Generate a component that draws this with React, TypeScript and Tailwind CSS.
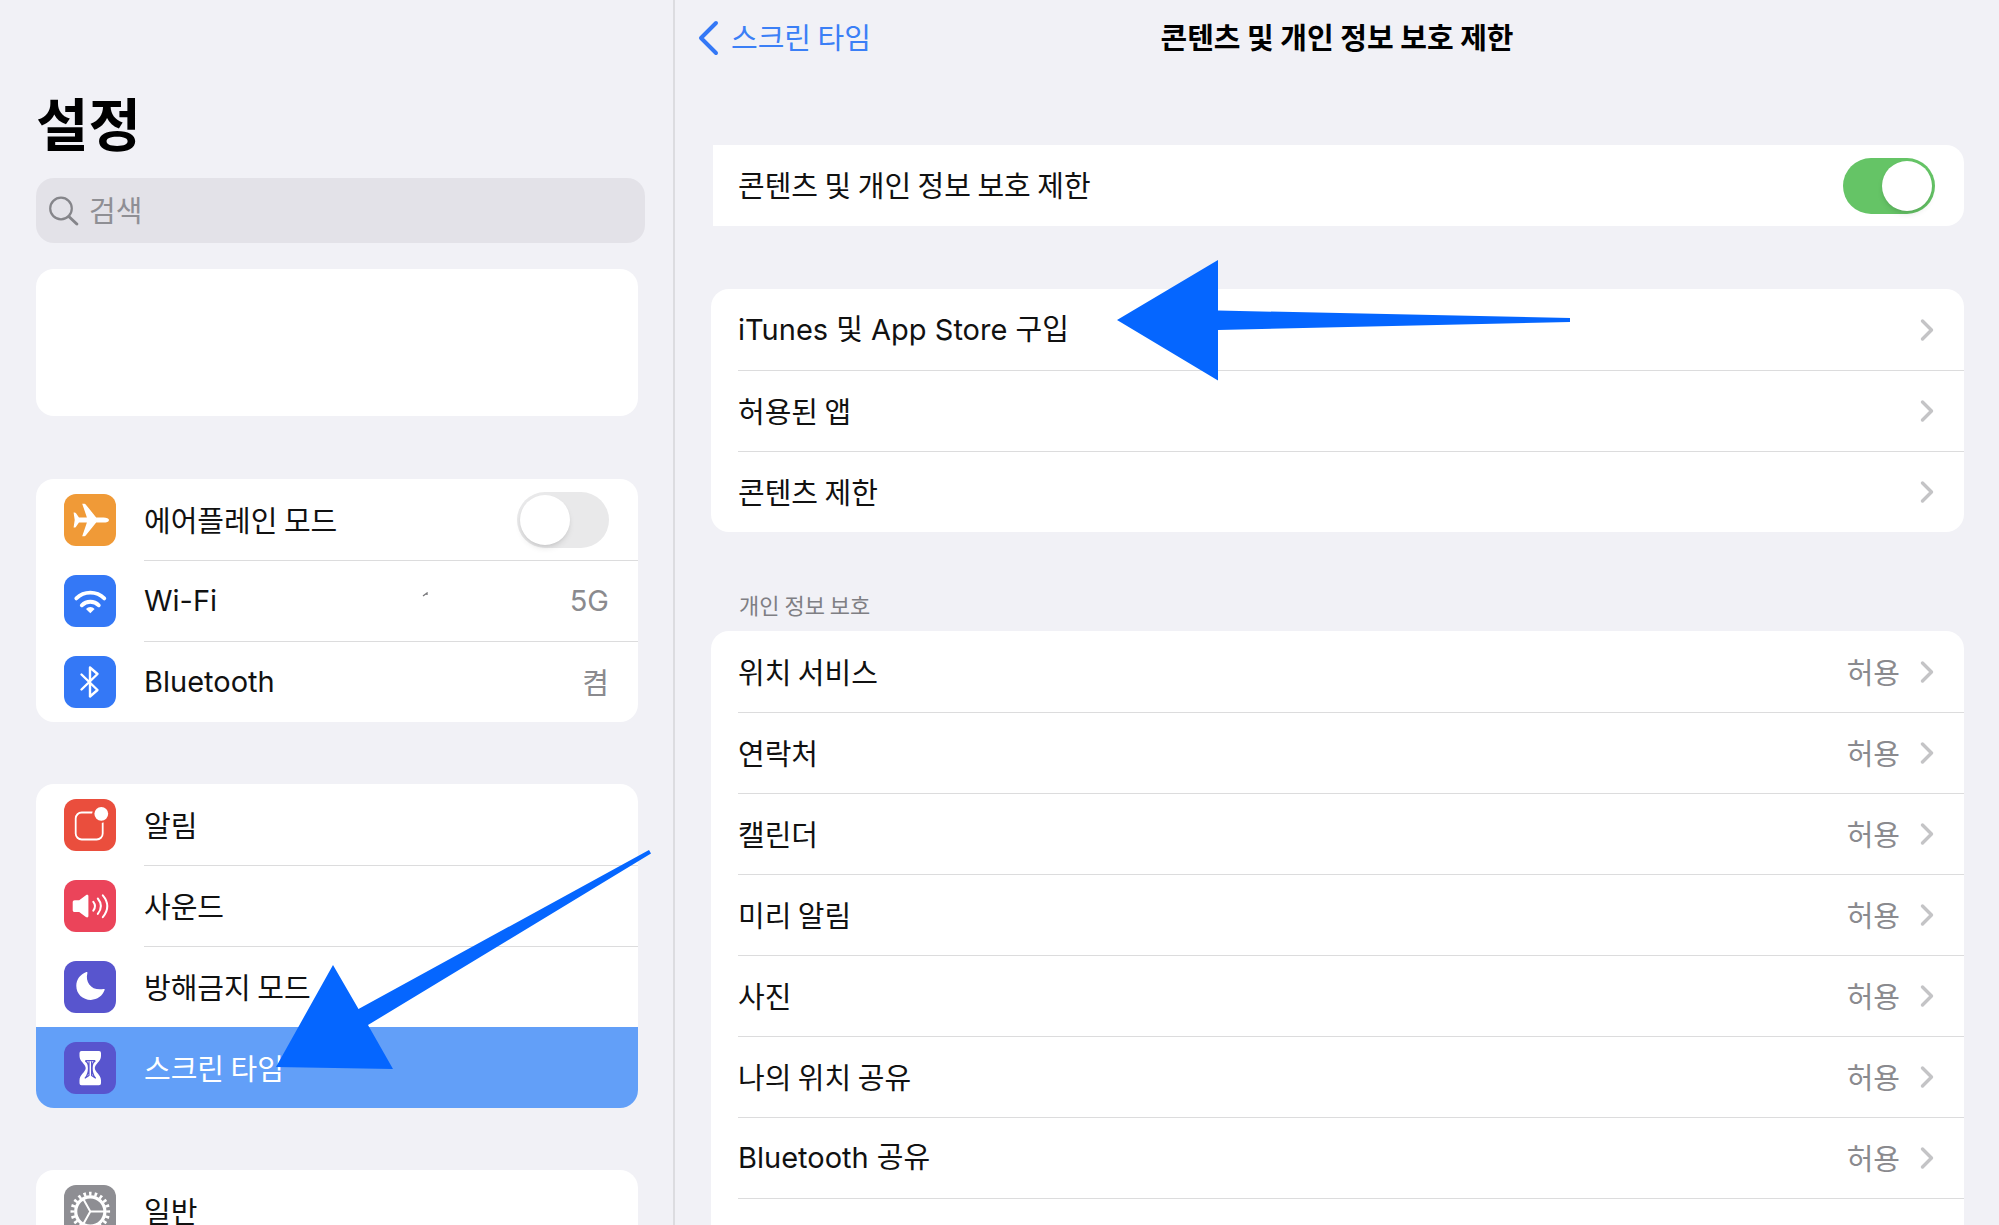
import React, { useState } from "react";

type IconProps = { children: React.ReactNode; color: string };

function AppIcon({ children, color }: IconProps) {
  return (
    <span className={`flex size-[52px] shrink-0 overflow-hidden rounded-xl ${color}`}>
      <svg viewBox="0 0 52 52" className="size-full" fill="none" stroke="none" aria-hidden="true">
        {children}
      </svg>
    </span>
  );
}

const AirplaneIcon = () => (
  <AppIcon color="bg-[#f09a37]">
    <path
      fill="#fff"
      d="M45 26c0-1.700-2.500-2.600-5.500-2.600h-7.300L22.300 11.200c-.8-1.100-1.500-1.500-2.600-1.500h-1.500l4.700 13.700H15l-3-4.100c-.4-.6-.8-.9-1.500-.9H9.600l1.100 7.600-1.100 7.600h.9c.7 0 1.100-.3 1.500-.9l3-4.100h7.900l-4.700 13.700h1.500c1.100 0 1.800-.4 2.600-1.500l9.900-12.200h7.300c3 0 5.500-.9 5.500-2.600z"
    />
  </AppIcon>
);

const WifiIcon = () => (
  <AppIcon color="bg-[#3478f6]">
    <path d="M12.300 23.400A20 20 0 0 1 40.300 23.400" stroke="#fff" strokeWidth="3.800" strokeLinecap="round" />
    <path d="M17.800 30.300A12 12 0 0 1 34.800 30.300" stroke="#fff" strokeWidth="3.800" strokeLinecap="round" />
    <path fill="#fff" d="M26.300 38.200l-4.300-4.300a6 6 0 0 1 8.600 0z" />
  </AppIcon>
);

const BluetoothIcon = () => (
  <AppIcon color="bg-[#3478f6]">
    <path d="M17.500 18.500l16 15.500-7.500 6.500v-29l7.500 6.500-16 15.500" stroke="#fff" strokeWidth="2.400" strokeLinejoin="round" strokeLinecap="round" />
  </AppIcon>
);

const NotificationIcon = () => (
  <AppIcon color="bg-[#ea4e3d]">
    <rect x="11.700" y="13.500" width="27" height="27" rx="6" stroke="#fff" strokeWidth="1.800" />
    <circle cx="37.300" cy="14.800" r="9.200" fill="#ea4e3d" />
    <circle cx="37.300" cy="14.800" r="6.900" fill="#fff" />
  </AppIcon>
);

const SoundIcon = () => (
  <AppIcon color="bg-[#eb445a]">
    <path fill="#fff" d="M8.700 22.300c0-1.400.7-2.100 2.100-2.100h4.400l6.700-5c1.200-.9 2.500-.5 2.500.9v20c0 1.400-1.300 1.800-2.500.9l-6.700-5h-4.400c-1.400 0-2.100-.7-2.100-2.100z" />
    <path d="M29.300 21.800q3.400 4.200 0 8.800M33.800 18.500q6.200 7.500 0 15.400M38.800 15.300q9 10.700 0 21.800" stroke="#fff" strokeWidth="2" strokeLinecap="round" />
  </AppIcon>
);

const MoonIcon = () => (
  <AppIcon color="bg-[#5855ce]">
    <path
      fill="#fff"
      d="M22.400 11.100c.8-.3 1.200.1 1 .8-2.600 10 4.700 18.300 16.200 16.100.9-.1 1.300.3 1 1.100-2 5.800-7.500 9.800-13.700 9.800-8.300 0-14.600-6.100-14.600-14.200 0-6 4-11.500 10.100-13.600z"
    />
  </AppIcon>
);

const HourglassIcon = () => (
  <AppIcon color="bg-[#5855ce]">
    <path
      fill="#fff"
      d="M17.500 9h17.500q2 0 2 2v3c0 5.500-6.200 8-6.200 12.100s6.200 6.600 6.200 12.100v3q0 2-2 2H17.500q-2 0-2-2v-3c0-5.500 6.200-8 6.200-12.100s-6.200-6.600-6.200-12.100v-3q0-2 2-2z"
    />
    <path
      d="M21.300 18.700h10M25 19.500v14l-3.800 2.500q3.300-4 3.300-9.800t-3.300-7.300M27.600 19.500v14l3.800 2.500q-3.300-4-3.300-9.800t3.300-7.300"
      stroke="#5855ce"
      strokeWidth="1.200"
      strokeLinejoin="round"
    />
  </AppIcon>
);

const GearIcon = () => (
  <AppIcon color="bg-[#8e8e93]">
    <circle cx="26.300" cy="26.500" r="14.600" stroke="#fff" strokeWidth="3.200" />
    <circle cx="26.300" cy="26.500" r="17.800" stroke="#fff" strokeWidth="4" pathLength="40" strokeDasharray="0.900 1.100" strokeDashoffset="0.450" />
    <path d="M26.300 26.500h14M26.300 26.500l-7-12.600M26.300 26.500l-7 12.600" stroke="#fff" strokeWidth="2" />
  </AppIcon>
);

function Switch({ label, initial }: { label: string; initial: boolean }) {
  const [on, setOn] = useState(initial);
  return (
    <label className="relative flex h-14 w-[92px] shrink-0 cursor-pointer">
      <input
        type="checkbox"
        role="switch"
        aria-label={label}
        checked={on}
        onChange={(e) => setOn(e.target.checked)}
        className="peer sr-only"
      />
      <span className="flex size-full items-center rounded-full bg-[#e9e9ea] p-[3px] peer-checked:justify-end peer-checked:bg-[#65c466]">
        <span className="size-[50px] rounded-full bg-white shadow-md" />
      </span>
    </label>
  );
}

/* Labels with Latin words use Inter; Hangul in them falls through to Noto. */
function Label({ text }: { text: string }) {
  const latin = /[A-Za-z]/.test(text);
  return (
    <span className="block pb-[3px]">
      <span className={latin ? "font-[Inter,'Noto_Sans_CJK_KR',sans-serif]" : ""}>{text}</span>
    </span>
  );
}

type Item = {
  label: string;
  icon?: React.ReactNode;
  value?: string;
  mark?: boolean;
  toggle?: boolean;
  selected?: boolean;
};

function SidebarGroup({ items, children }: { items: Item[]; children?: React.ReactNode }) {
  return (
    <div className="relative mr-[7px]">
      <ul className="overflow-hidden rounded-[18px] bg-white">
        {items.map((item, i) => {
          const divided = i > 0 && !item.selected;
          const body = (
            <>
              {item.icon}
              <span
                className={`flex h-full min-w-0 flex-1 items-center justify-between border-t pr-[29px] ${
                  divided ? "border-[#dcdcdd]" : "border-transparent"
                }`}
              >
                <Label text={item.label} />
                {item.mark && (
                  <svg viewBox="0 0 6 6" className="mb-3 ml-16 size-1.5" fill="none" aria-hidden="true">
                    <path d="M1 4L5 1V3" stroke="#77777a" strokeWidth="1.300" />
                  </svg>
                )}
                {item.value && (
                  <span className="text-[#8a8a8e]">
                    <Label text={item.value} />
                  </span>
                )}
                {item.toggle && <Switch label={item.label} initial={false} />}
              </span>
            </>
          );
          return (
            <li key={item.label}>
              {item.toggle ? (
                <div className="flex h-[81px] items-center gap-7 pl-7">{body}</div>
              ) : (
                <button
                  type="button"
                  className={`flex h-[81px] w-full items-center gap-7 pl-7 text-left ${
                    item.selected ? "bg-[#629ff8] text-white" : ""
                  }`}
                >
                  {body}
                </button>
              )}
            </li>
          );
        })}
      </ul>
      {children}
    </div>
  );
}

function Chevron() {
  return (
    <svg viewBox="0 0 14 24" className="h-6 w-3.5 shrink-0" fill="none" aria-hidden="true">
      <path d="M2.500 3l9 9-9 9" stroke="#c4c4c6" strokeWidth="3.400" strokeLinecap="round" strokeLinejoin="round" />
    </svg>
  );
}

function DetailGroup({ items, children }: { items: Item[]; children?: React.ReactNode }) {
  return (
    <div className="relative">
      <ul className="overflow-hidden rounded-[18px] bg-white pl-[27px]">
        {items.map((item, i) => (
          <li key={item.label} className={`border-t ${i > 0 ? "border-[#dcdcdd]" : "border-transparent"}`}>
            <button type="button" className="flex h-20 w-full items-center pr-[30px] text-left">
              <span className="flex-1">
                <Label text={item.label} />
              </span>
              {item.value && (
                <span className="mr-5 text-[#8a8a8e]">
                  <Label text={item.value} />
                </span>
              )}
              <Chevron />
            </button>
          </li>
        ))}
      </ul>
      {children}
    </div>
  );
}

const connections: Item[] = [
  { label: "에어플레인 모드", icon: <AirplaneIcon />, toggle: true },
  { label: "Wi-Fi", icon: <WifiIcon />, value: "5G", mark: true },
  { label: "Bluetooth", icon: <BluetoothIcon />, value: "켬" },
];

const alerts: Item[] = [
  { label: "알림", icon: <NotificationIcon /> },
  { label: "사운드", icon: <SoundIcon /> },
  { label: "방해금지 모드", icon: <MoonIcon /> },
  { label: "스크린 타임", icon: <HourglassIcon />, selected: true },
];

const general: Item[] = [{ label: "일반", icon: <GearIcon /> }];

const restrictions: Item[] = [
  { label: "iTunes 및 App Store 구입" },
  { label: "허용된 앱" },
  { label: "콘텐츠 제한" },
];

const privacy: Item[] = [
  "위치 서비스",
  "연락처",
  "캘린더",
  "미리 알림",
  "사진",
  "나의 위치 공유",
  "Bluetooth 공유",
  "마이크",
].map((label) => ({ label, value: "허용" }));

export default function App() {
  return (
    <div className="flex h-screen overflow-hidden bg-[#f1f1f6] font-['Noto_Sans_CJK_KR',Inter,sans-serif] text-[29px] leading-10 text-[#111]">
      <aside className="w-[675px] shrink-0 border-r-2 border-[#dcdce0] pt-[89px] pr-[28px] pl-9">
        <h1 className="mb-[25px] text-[57px] leading-[64px] font-bold text-black">설정</h1>
        <label className="mb-[26px] flex h-[65px] items-center gap-[10px] rounded-[18px] bg-[#e3e2e8] pl-[13px]">
          <svg viewBox="0 0 30 30" className="size-[30px] shrink-0" fill="none" stroke="#85858a" aria-hidden="true">
            <circle cx="12" cy="12.500" r="10.800" strokeWidth="2.200" />
            <path d="M19.800 20.500l8 7.500" strokeWidth="3" strokeLinecap="round" />
          </svg>
          <input
            type="search"
            aria-label="검색"
            placeholder="검색"
            className="min-w-0 flex-1 bg-transparent pb-1 outline-none placeholder:text-[#8f8f94]"
          />
        </label>
        <div className="mr-[7px] mb-[63px] h-[147px] rounded-[18px] bg-white" />
        <nav className="flex flex-col gap-[62px]">
          <SidebarGroup items={connections} />
          <SidebarGroup items={alerts}>
            <svg viewBox="276 850 376 220" className="pointer-events-none absolute top-[66px] left-60 z-10 h-[220px] w-[376px]" aria-hidden="true">
              <path fill="#0566ff" d="M276 1067L333 965L358.500 1009L649 850L651 853.500L368 1025L393 1069Z" />
            </svg>
          </SidebarGroup>
          <SidebarGroup items={general} />
        </nav>
      </aside>

      <main className="min-w-0 flex-1 pr-[35px] pl-9">
        <header className="-mr-[35px] -ml-9 mb-[74px] grid h-[71px] grid-cols-[1fr_auto_1fr] items-center">
          <button type="button" className="flex items-center gap-3 pl-[22px] text-left text-[#3b7ff6]">
            <svg viewBox="0 0 22 36" className="mt-1 h-9 w-[22px]" fill="none" aria-hidden="true">
              <path d="M19 3L4 18l15 15" stroke="#3478f6" strokeWidth="4" strokeLinecap="round" strokeLinejoin="round" />
            </svg>
            스크린 타임
          </button>
          <h2 className="font-semibold text-black">콘텐츠 및 개인 정보 보호 제한</h2>
        </header>

        <section className="mb-[63px] ml-0.5 flex h-[81px] items-center justify-between rounded-r-[18px] bg-white pr-[29px] pl-[25px]">
          <Label text="콘텐츠 및 개인 정보 보호 제한" />
          <Switch label="콘텐츠 및 개인 정보 보호 제한" initial={true} />
        </section>

        <DetailGroup items={restrictions}>
          <svg viewBox="1117 260 454 121" className="pointer-events-none absolute -top-[29px] left-[406px] z-10 h-[121px] w-[454px]" aria-hidden="true">
            <path fill="#0566ff" d="M1117 320L1218 260V310.500L1570 318V322L1218 330V380.500Z" />
          </svg>
        </DetailGroup>

        <h3 className="pt-14 pb-[11px] pl-7 text-[22px] leading-8 text-[#7f7f84]">개인 정보 보호</h3>
        <DetailGroup items={privacy} />
      </main>
    </div>
  );
}
